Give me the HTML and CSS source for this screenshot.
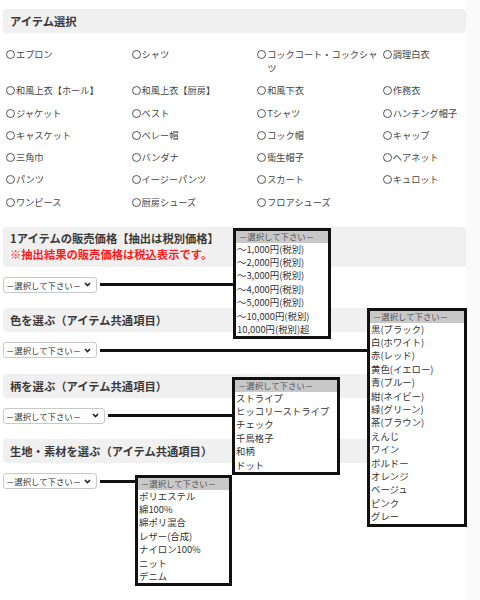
FILE: index.html
```html
<!DOCTYPE html>
<html lang="ja">
<head>
<meta charset="utf-8">
<title>アイテム選択</title>
<link rel="stylesheet" href="styles.css">
</head>
<body>
<div class="page">
  <div class="sec-head">アイテム選択</div>
  <div class="radio-grid">
    <label class="radio">エプロン</label>
    <label class="radio">シャツ</label>
    <label class="radio">コックコート・コックシャツ</label>
    <label class="radio">調理白衣</label>
    <label class="radio">和風上衣【ホール】</label>
    <label class="radio">和風上衣【厨房】</label>
    <label class="radio">和風下衣</label>
    <label class="radio">作務衣</label>
    <label class="radio">ジャケット</label>
    <label class="radio">ベスト</label>
    <label class="radio">Tシャツ</label>
    <label class="radio">ハンチング帽子</label>
    <label class="radio">キャスケット</label>
    <label class="radio">ベレー帽</label>
    <label class="radio">コック帽</label>
    <label class="radio">キャップ</label>
    <label class="radio">三角巾</label>
    <label class="radio">バンダナ</label>
    <label class="radio">衛生帽子</label>
    <label class="radio">ヘアネット</label>
    <label class="radio">パンツ</label>
    <label class="radio">イージーパンツ</label>
    <label class="radio">スカート</label>
    <label class="radio">キュロット</label>
    <label class="radio">ワンピース</label>
    <label class="radio">厨房シューズ</label>
    <label class="radio">フロアシューズ</label>
  </div>

  <div class="sec-head sec-head--price">
    <div>1アイテムの販売価格【抽出は税別価格】</div>
    <div class="note">※抽出結果の販売価格は税込表示です。</div>
  </div>
  <div class="sel-row">
    <div class="fake-select"><span>－選択して下さい－</span><svg class="chev" width="7" height="5" viewBox="0 0 7 5"><path d="M1 1 L3.5 3.6 L6 1" fill="none" stroke="#222" stroke-width="1.6"/></svg></div>
    <div class="line line--price"></div>
  </div>

  <div class="sec-head sec-head--next">色を選ぶ（アイテム共通項目）</div>
  <div class="sel-row">
    <div class="fake-select"><span>－選択して下さい－</span><svg class="chev" width="7" height="5" viewBox="0 0 7 5"><path d="M1 1 L3.5 3.6 L6 1" fill="none" stroke="#222" stroke-width="1.6"/></svg></div>
    <div class="line line--color"></div>
  </div>

  <div class="sec-head sec-head--next">柄を選ぶ（アイテム共通項目）</div>
  <div class="sel-row">
    <div class="fake-select fake-select--wide"><span>－選択して下さい－</span><svg class="chev" width="7" height="5" viewBox="0 0 7 5"><path d="M1 1 L3.5 3.6 L6 1" fill="none" stroke="#222" stroke-width="1.6"/></svg></div>
    <div class="line line--pattern"></div>
  </div>

  <div class="sec-head sec-head--next">生地・素材を選ぶ（アイテム共通項目）</div>
  <div class="sel-row">
    <div class="fake-select"><span>－選択して下さい－</span><svg class="chev" width="7" height="5" viewBox="0 0 7 5"><path d="M1 1 L3.5 3.6 L6 1" fill="none" stroke="#222" stroke-width="1.6"/></svg></div>
    <div class="line line--material"></div>
  </div>

  <ul class="dd dd--price">
    <li class="dd-head">－選択して下さい－</li>
    <li>～1,000円(税別)</li>
    <li>～2,000円(税別)</li>
    <li>～3,000円(税別)</li>
    <li>～4,000円(税別)</li>
    <li>～5,000円(税別)</li>
    <li>～10,000円(税別)</li>
    <li>10,000円(税別)超</li>
  </ul>

  <ul class="dd dd--color">
    <li class="dd-head">－選択して下さい－</li>
    <li>黒(ブラック)</li>
    <li>白(ホワイト)</li>
    <li>赤(レッド)</li>
    <li>黄色(イエロー)</li>
    <li>青(ブルー)</li>
    <li>紺(ネイビー)</li>
    <li>緑(グリーン)</li>
    <li>茶(ブラウン)</li>
    <li>えんじ</li>
    <li>ワイン</li>
    <li>ボルドー</li>
    <li>オレンジ</li>
    <li>ベージュ</li>
    <li>ピンク</li>
    <li>グレー</li>
  </ul>

  <ul class="dd dd--pattern">
    <li class="dd-head">－選択して下さい－</li>
    <li>ストライプ</li>
    <li>ヒッコリーストライプ</li>
    <li>チェック</li>
    <li>千鳥格子</li>
    <li>和柄</li>
    <li>ドット</li>
  </ul>

  <ul class="dd dd--material">
    <li class="dd-head">－選択して下さい－</li>
    <li>ポリエステル</li>
    <li>綿100%</li>
    <li>綿ポリ混合</li>
    <li>レザー(合成)</li>
    <li>ナイロン100%</li>
    <li>ニット</li>
    <li>デニム</li>
  </ul>
</div>
</body>
</html>
```

FILE: styles.css
```css
html {
  background: #fafafa;
}
body {
  margin: 0;
  font-family: "Noto Sans CJK JP", "Noto Sans", sans-serif;
  color: #333;
}
.page {
  position: relative;
  width: 466px;
  min-height: 600px;
  box-sizing: border-box;
  padding: 9px 0 0 3px;
  background: #fff;
}
.sec-head {
  width: 463px;
  box-sizing: border-box;
  height: 24px;
  line-height: 24px;
  padding: 0 7px;
  background: #f0f0f0;
  border-radius: 4px;
  font-size: 11.3px;
  font-weight: bold;
  color: #3a3a3a;
}
.sec-head--price {
  height: 40px;
  line-height: 16px;
  padding: 3px 7px 5px;
  margin-top: 18.2px;
}
.sec-head--next {
  margin-top: 15.5px;
}
.note {
  color: #ff1a1a;
}
.radio-grid {
  margin-top: 14px;
  padding-left: 3px;
  display: grid;
  grid-template-columns: 125.6px 125.6px 125.6px 1fr;
  row-gap: 8.3px;
}
.radio {
  display: flex;
  align-items: flex-start;
  font-size: 9.2px;
  line-height: 14px;
  color: #444;
  padding-right: 1px;
}
.radio::before {
  content: "";
  flex: none;
  width: 7px;
  height: 7px;
  margin: 3px 1px 0 0;
  border: 1px solid #555;
  border-radius: 50%;
}
.sel-row {
  margin-top: 10px;
  display: flex;
  align-items: center;
  height: 16px;
}
.fake-select {
  width: 94px;
  height: 16px;
  box-sizing: border-box;
  border: 1px solid #c9c9c9;
  border-radius: 3px;
  background: #fff;
  display: flex;
  align-items: center;
  justify-content: space-between;
  padding: 0 5px 0 2px;
  font-size: 8.4px;
  color: #333;
  white-space: nowrap;
}
.fake-select--wide {
  width: 102px;
}
.chev {
  display: block;
  flex: none;
}
.line {
  height: 3px;
  background: #111;
  margin-left: 3px;
}
.line--price { width: 133px; }
.line--color { width: 267px; }
.line--pattern { width: 124px; }
.line--material { width: 35px; }

.dd {
  position: absolute;
  margin: 0;
  padding: 0;
  list-style: none;
  border: 3px solid #111;
  background: #fff;
  box-sizing: border-box;
  font-size: 9.4px;
  line-height: 13.4px;
  color: #333;
}
.dd li {
  padding-left: 1px;
  white-space: nowrap;
}
.dd .dd-head {
  background: #c8c8c8;
  color: #555;
  height: 11.5px;
  line-height: 11.5px;
  font-size: 8.4px;
  padding-left: 3px;
}
.dd--price { left: 233px; top: 228px; width: 98px; }
.dd--color { left: 367px; top: 308px; width: 100px; }
.dd--pattern { left: 232px; top: 377px; width: 108px; }
.dd--material { left: 135px; top: 475px; width: 97px; }
```
